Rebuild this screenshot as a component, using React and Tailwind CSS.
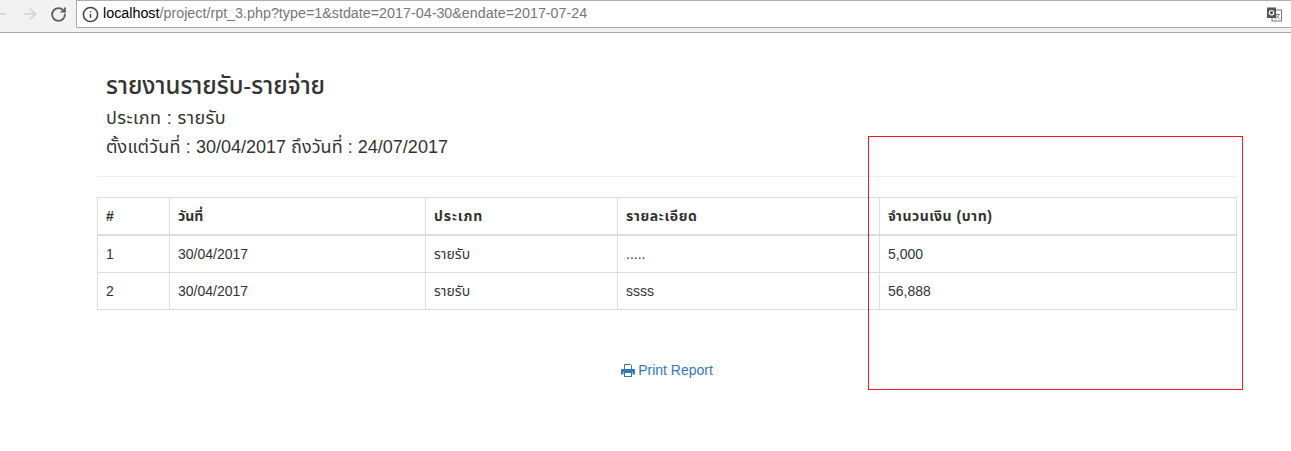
import { RotateCw, ArrowLeft, ArrowRight, Info } from "lucide-react";

const font = "[font-family:'Liberation_Sans','Noto_Sans_Thai','Noto_Sans','DejaVu_Sans',sans-serif]";
const rows = [
  ["1", "30/04/2017", "รายรับ", ".....", "5,000"],
  ["2", "30/04/2017", "รายรับ", "ssss", "56,888"],
];
const heads = [
  ["#", "w-[72px]", ""],
  ["วันที่", "w-[256px]", ""],
  ["ประเภท", "w-[192px]", "tracking-[0.9px]"],
  ["รายละเอียด", "w-[262px]", "tracking-[0.6px]"],
  ["จำนวนเงิน (บาท)", "", "tracking-[0.5px]"],
];

export default function App() {
  return (
    <div className={`relative h-[451px] w-[1291px] overflow-hidden bg-white text-[#333] ${font}`}>
      <div className="flex h-[33px] items-start border-b border-[#a9a9a9] bg-[#f2f2f2]">
        <div className="flex h-[27px] w-[76px] items-center pt-[1px]">
          <ArrowLeft size={18} strokeWidth={2} className="ml-[-9px] text-[#d0d0d0]" />
          <ArrowRight size={18} strokeWidth={2} className="ml-[12px] text-[#d0d0d0]" />
          <RotateCw size={17} strokeWidth={2.6} className="ml-[11px] text-[#5f5f5f]" />
        </div>
        <div className="flex h-[28px] flex-1 items-center rounded-bl-[2px] border border-r-0 border-[#a9a9a9] border-t-[#b0b0b0] bg-white pl-[5px]">
          <Info size={17} strokeWidth={2.2} className="text-[#444]" />
          <span className="ml-[4px] text-[14.32px] text-[#767676]">
            <span className="text-black">localhost</span>/project/rpt_3.php?type=1&amp;stdate=2017-04-30&amp;endate=2017-07-24
          </span>
          <svg className="ml-auto mr-[9px]" width="15" height="15" viewBox="0 0 15 15">
            <rect x="5" y="3" width="9.5" height="11" fill="#fff" stroke="#777" />
            <rect x="0" y="0.5" width="9" height="10.5" fill="#555" />
            <circle cx="4.5" cy="5.7" r="2.2" fill="none" stroke="#fff" strokeWidth="1.2" />
            <path d="M8 7.5h5M10.5 6.5v1M12 7.5c-.5 2-2 3.5-3.5 4M9.5 8.5c.7 1.300 1.800 2.500 3 3" fill="none" stroke="#666" strokeWidth="0.8" />
          </svg>
        </div>
      </div>

      <div className="mx-[97px] w-[1140px]">
        <div className="px-[9px] pt-[37px]">
          <h3 className="text-[24px] leading-[32px] font-medium">รายงานรายรับ-รายจ่าย</h3>
          <div className="mt-[3px] text-[18px] leading-[26px] tracking-[0.4px]">ประเภท : รายรับ</div>
          <div className="mt-[3px] text-[18px] leading-[26px]">
            <span className="tracking-[0.15px]">ตั้งแต่วันที่ : </span>30/04/2017 <span className="tracking-[0.05px]">ถึงวันที่ : </span>24/07/2017
          </div>
        </div>
        <div className="mt-[16px] border-t border-[#eeeeee]" />
        <table className="mt-[20px] w-full table-fixed border-collapse text-[14px]">
          <thead>
            <tr>
              {heads.map(([h, w, t]) => (
                <th key={h} className={`${w} ${t} h-[37px] border border-b-2 border-[#dddddd] px-[8px] pt-[2px] text-left font-bold`}>{h}</th>
              ))}
            </tr>
          </thead>
          <tbody>
            {rows.map((r, ri) => (
              <tr key={r[0]} className="first:h-[38px] h-[37px]">
                {r.map((c, i) => (
                  <td key={i} className={`border border-[#dddddd] px-[8px] ${ri === 0 ? "pt-[2px]" : ""}`}>{c}</td>
                ))}
              </tr>
            ))}
          </tbody>
        </table>
        <div className="mt-[50px] flex items-center justify-center text-[14px] leading-[20px] text-[#337ab7]">
          <svg className="mr-[3px]" width="14" height="13" viewBox="0 0 14 13">
            <path d="M3.500 5V.5h6L10.500 1.500V5" fill="none" stroke="#337ab7" />
            <path d="M1 5h12a1 1 0 0 1 1 1v4.500h-2.500V8h-9v2.500H0V6a1 1 0 0 1 1-1z" fill="#337ab7" />
            <rect x="3.500" y="8.500" width="7" height="4" fill="none" stroke="#337ab7" />
          </svg>
          Print Report
        </div>
      </div>

      <div className="absolute left-[868px] top-[136px] h-[254px] w-[375px] border border-[#ed1c24]" />
    </div>
  );
}
